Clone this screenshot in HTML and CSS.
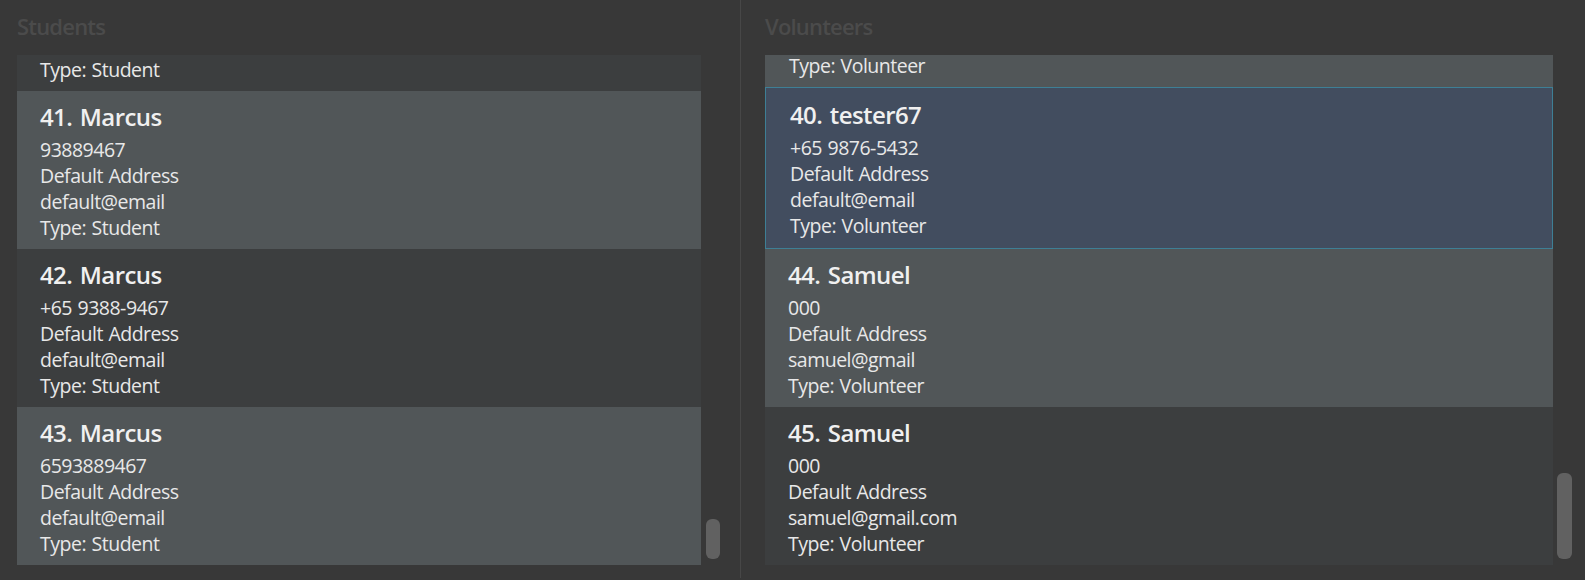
FILE: index.html
```html
<!DOCTYPE html>
<html lang="en">
<head>
<meta charset="utf-8">
<title>Students and Volunteers</title>
<link rel="stylesheet" href="styles.css">
</head>
<body>
<div class="app">
  <section class="panel panel-left">
    <div class="panel-title">Students</div>
    <div class="list-row">
      <div class="viewport viewport-left">
        <div class="cards">
          <div class="card card-even card-tail card-tail-left">
            <div class="line">Type: Student</div>
          </div>
          <div class="card card-odd">
            <div class="name">41. Marcus</div>
            <div class="line">93889467</div>
            <div class="line">Default Address</div>
            <div class="line">default@email</div>
            <div class="line">Type: Student</div>
          </div>
          <div class="card card-even">
            <div class="name">42. Marcus</div>
            <div class="line">+65 9388-9467</div>
            <div class="line">Default Address</div>
            <div class="line">default@email</div>
            <div class="line">Type: Student</div>
          </div>
          <div class="card card-odd">
            <div class="name">43. Marcus</div>
            <div class="line">6593889467</div>
            <div class="line">Default Address</div>
            <div class="line">default@email</div>
            <div class="line">Type: Student</div>
          </div>
        </div>
      </div>
      <div class="track track-left">
        <div class="thumb" style="margin-top:464px;height:40px"></div>
      </div>
    </div>
  </section>
  <div class="divider"></div>
  <section class="panel panel-right">
    <div class="panel-title">Volunteers</div>
    <div class="list-row">
      <div class="viewport viewport-right">
        <div class="cards">
          <div class="card card-odd card-tail card-tail-right">
            <div class="line">Type: Volunteer</div>
          </div>
          <div class="card card-selected">
            <div class="name">40. tester67</div>
            <div class="line">+65 9876-5432</div>
            <div class="line">Default Address</div>
            <div class="line">default@email</div>
            <div class="line">Type: Volunteer</div>
          </div>
          <div class="card card-odd">
            <div class="name">44. Samuel</div>
            <div class="line">000</div>
            <div class="line">Default Address</div>
            <div class="line">samuel@gmail</div>
            <div class="line">Type: Volunteer</div>
          </div>
          <div class="card card-even">
            <div class="name">45. Samuel</div>
            <div class="line">000</div>
            <div class="line">Default Address</div>
            <div class="line">samuel@gmail.com</div>
            <div class="line">Type: Volunteer</div>
          </div>
        </div>
      </div>
      <div class="track track-right">
        <div class="thumb" style="margin-top:418px;height:86px"></div>
      </div>
    </div>
  </section>
</div>
</body>
</html>
```
FILE: styles.css
```css
* { box-sizing: border-box; }
html, body {
  margin: 0;
  padding: 0;
  background: #383838;
  width: 1585px;
  height: 580px;
  overflow: hidden;
}
body {
  font-family: "Open Sans", "Noto Sans", sans-serif;
  color: #ececec;
}
.app {
  display: flex;
  height: 580px;
}
.panel {
  display: flex;
  flex-direction: column;
}
.panel-left {
  width: 740px;
  padding-left: 17px;
}
.panel-right {
  flex: 1;
  padding-left: 24px;
}
.divider {
  width: 1px;
  height: 578px;
  background: #474747;
}
.panel-title {
  height: 55px;
  padding-top: 11px;
  font-size: 22px;
  line-height: 30px;
  font-weight: 600;
  letter-spacing: -0.8px;
  color: #4b4b4b;
}
.list-row {
  display: flex;
  height: 510px;
}
.viewport {
  height: 510px;
}
.viewport-left { width: 684px; }
.viewport-right { width: 788px; }
.cards {
  display: flex;
  flex-direction: column;
}
.card {
  height: 158px;
  padding: 10px 0 0 23px;
  flex-shrink: 0;
}
.card-tail {
  display: flex;
  flex-direction: column;
  justify-content: flex-end;
  padding-top: 0;
  padding-bottom: 8px;
}
.card-tail-left { height: 36px; }
.card-tail-right {
  height: 32px;
  padding-left: 24px;
  padding-bottom: 10px;
}
.card-tail-right .line { line-height: 22px; }
.card-even { background: #3c3e3f; }
.card-odd { background: #515658; }
.card-selected {
  background: #424d5f;
  border: 1px solid #3e7f95;
  height: 162px;
  padding: 11px 0 0 24px;
}
.name {
  font-size: 24px;
  line-height: 32px;
  font-weight: 600;
  letter-spacing: -0.6px;
  word-spacing: 2px;
  margin-bottom: 4px;
  color: #f0f0f0;
}
.line {
  font-size: 19.5px;
  line-height: 26px;
  letter-spacing: -0.5px;
  word-spacing: 1px;
  color: #e8e8e8;
}
.track {
  display: flex;
  flex-direction: column;
}
.track-left {
  width: 14px;
  margin-left: 5px;
}
.track-right {
  width: 15px;
  margin-left: 4px;
}
.thumb {
  width: 100%;
  border-radius: 6px;
  background: #616161;
  flex-shrink: 0;
}
```
